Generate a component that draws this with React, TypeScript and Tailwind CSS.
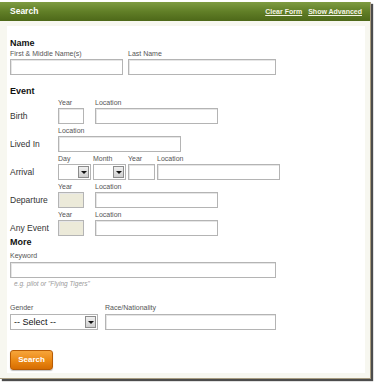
import React from 'react';

const font = "font-['Liberation_Sans',Arial,sans-serif]";

const Field: React.FC<{ w: string; dim?: boolean; className?: string }> = ({ w, dim, className = '' }) => (
  <div
    className={`${w} h-[16px] border border-[#b4b4b4] shadow-[inset_1px_1px_0_#e6e6e6] ${dim ? 'bg-[#ecead9]' : 'bg-white'} ${className}`}
  />
);

const Select: React.FC<{ w: string; text?: string; className?: string }> = ({ w, text, className = '' }) => (
  <div
    className={`${w} h-[16px] border border-[#b4b4b4] bg-white flex items-center justify-between pl-[3px] pr-[1px] ${className}`}
  >
    <span className="text-[9px] leading-none text-[#111] whitespace-nowrap">{text}</span>
    <span className="w-[11px] h-[12px] border border-[#8c8c8c] bg-gradient-to-b from-[#f0f0f0] to-[#cfcfcf] flex items-center justify-center">
      <span className="w-0 h-0 border-l-[3px] border-r-[3px] border-t-[3px] border-l-transparent border-r-transparent border-t-[#111]" />
    </span>
  </div>
);

const Label: React.FC<{ children?: React.ReactNode; className?: string }> = ({ children, className = '' }) => (
  <span className={`block text-[7px] leading-[9px] text-[#555] whitespace-nowrap ${className}`}>{children}</span>
);

const Heading: React.FC<{ children: React.ReactNode; className?: string }> = ({ children, className = '' }) => (
  <div className={`text-[9px] leading-[12px] font-bold text-[#111] ${className}`}>{children}</div>
);

const EventRow: React.FC<{
  name: string;
  labels: { text: string; w: string }[];
  children: React.ReactNode;
}> = ({ name, labels, children }) => (
  <div className="flex flex-col h-[28px]">
    <div className="flex h-[10px] pl-[48px]">
      {labels.map((l, i) => (
        <div key={i} className={`${l.w} shrink-0`}>
          <Label>{l.text}</Label>
        </div>
      ))}
    </div>
    <div className="flex items-center h-[16px]">
      <span className="w-[48px] shrink-0 text-[8.5px] leading-none text-[#333]">{name}</span>
      {children}
    </div>
  </div>
);

export default function App() {
  return (
    <div className={`w-[376px] h-[385px] bg-white ${font}`}>
      <div className="w-[371px] h-[377px] mt-[2px] bg-[#f7f7f0] border-r border-b border-[#a89c80] shadow-[2px_2px_1px_rgba(0,0,0,0.7)] flex flex-col">
        {/* header */}
        <div className="h-[19px] bg-gradient-to-b from-[#7f9c42] via-[#617f27] to-[#4d6819] flex items-center justify-between pl-[10px] pr-[8px]">
          <span className="text-white font-bold text-[8.5px] leading-none">Search</span>
          <div className="flex gap-[6px] text-[7px] font-bold text-[#f4f4e4] leading-none">
            <span className="underline">Clear Form</span>
            <span className="underline">Show Advanced</span>
          </div>
        </div>

        {/* body */}
        <div className="ml-[7px] mt-[5px] w-[358px] h-[347px] bg-white pl-[3px] flex flex-col">
          <Heading className="mt-[11px]">Name</Heading>
          <div className="flex h-[10px]">
            <div className="w-[118px]">
              <Label>First &amp; Middle Name(s)</Label>
            </div>
            <Label>Last Name</Label>
          </div>
          <div className="flex gap-[5px]">
            <Field w="w-[113px]" />
            <Field w="w-[148px]" />
          </div>

          <Heading className="mt-[10px]">Event</Heading>
          <div className="mt-[1px]">
            <EventRow
              name="Birth"
              labels={[
                { text: 'Year', w: 'w-[37px]' },
                { text: 'Location', w: 'w-[100px]' },
              ]}
            >
              <Field w="w-[26px]" />
              <Field w="w-[123px]" className="ml-[11px]" />
            </EventRow>
            <EventRow name="Lived In" labels={[{ text: 'Location', w: 'w-[100px]' }]}>
              <Field w="w-[123px]" />
            </EventRow>
            <EventRow
              name="Arrival"
              labels={[
                { text: 'Day', w: 'w-[35px]' },
                { text: 'Month', w: 'w-[35px]' },
                { text: 'Year', w: 'w-[29px]' },
                { text: 'Location', w: 'w-[100px]' },
              ]}
            >
              <Select w="w-[33px]" />
              <Select w="w-[33px]" className="ml-[2px]" />
              <Field w="w-[27px]" className="ml-[2px]" />
              <Field w="w-[123px]" className="ml-[2px]" />
            </EventRow>
            <EventRow
              name="Departure"
              labels={[
                { text: 'Year', w: 'w-[37px]' },
                { text: 'Location', w: 'w-[100px]' },
              ]}
            >
              <Field w="w-[26px]" dim />
              <Field w="w-[123px]" className="ml-[11px]" />
            </EventRow>
            <EventRow
              name="Any Event"
              labels={[
                { text: 'Year', w: 'w-[37px]' },
                { text: 'Location', w: 'w-[100px]' },
              ]}
            >
              <Field w="w-[26px]" dim />
              <Field w="w-[123px]" className="ml-[11px]" />
            </EventRow>
          </div>

          <Heading className="-mt-[2px]">More</Heading>
          <div className="mt-[3px] h-[10px]">
            <Label>Keyword</Label>
          </div>
          <Field w="w-[266px]" className="mt-[1px]" />
          <span className="mt-[2px] ml-[4px] text-[6.5px] leading-[8px] italic text-[#9a9a9a]">
            e.g. pilot or "Flying Tigers"
          </span>

          <div className="flex mt-[15px] h-[10px]">
            <div className="w-[95px]">
              <Label>Gender</Label>
            </div>
            <Label>Race/Nationality</Label>
          </div>
          <div className="flex gap-[7px] mt-[1px]">
            <Select w="w-[88px]" text="-- Select --" />
            <Field w="w-[171px]" />
          </div>

          <button className="mt-[20px] w-[43px] h-[20px] rounded-[3px] border border-[#b85c05] bg-gradient-to-b from-[#f6a53a] via-[#ec8a14] to-[#d66d02] text-white font-bold text-[8px] leading-none shadow-[0_1px_1px_rgba(0,0,0,0.25)]">
            Search
          </button>
        </div>
      </div>
    </div>
  );
}
